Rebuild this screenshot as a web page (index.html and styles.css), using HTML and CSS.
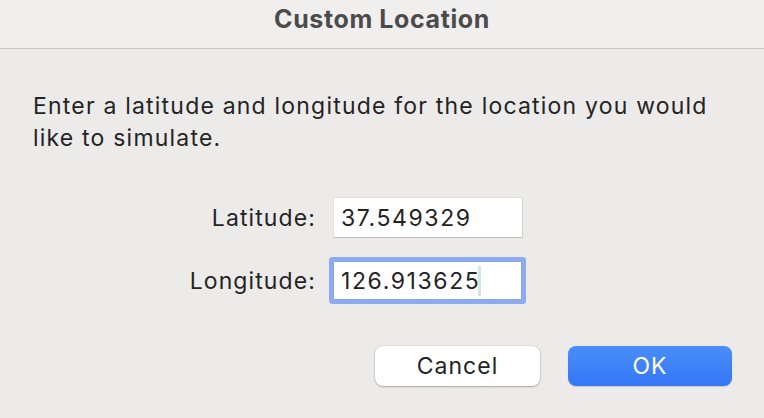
FILE: index.html
```html
<!DOCTYPE html>
<html>
<head>
<meta charset="utf-8">
<link rel="stylesheet" href="styles.css">
</head>
<body>
<div class="window">
  <div class="titlebar"><span class="title">Custom Location</span></div>
  <div class="content">
    <p class="message">Enter a latitude and longitude for the location you would like to simulate.</p>
    <div class="form">
      <div class="row">
        <label class="label">Latitude:</label>
        <div class="field"><span class="value">37.549329</span></div>
      </div>
      <div class="row">
        <label class="label">Longitude:</label>
        <div class="field focused"><span class="value">126.913625</span><span class="caret"></span></div>
      </div>
    </div>
    <div class="buttons">
      <button class="btn cancel">Cancel</button>
      <button class="btn ok">OK</button>
    </div>
  </div>
</div>
</body>
</html>
```
FILE: styles.css
```css
html, body {
  margin: 0;
  padding: 0;
  width: 764px;
  height: 418px;
  overflow: hidden;
  background: #ecebe9;
  font-family: Inter, "Noto Sans", sans-serif;
  color: #242424;
}
.window {
  display: flex;
  flex-direction: column;
  width: 764px;
  height: 418px;
}
.titlebar {
  height: 49px;
  background: #f0efed;
  border-bottom: 1px solid #c9c8c6;
  display: flex;
  justify-content: center;
  align-items: flex-start;
  box-sizing: border-box;
}
.title {
  font-size: 25px;
  line-height: 30px;
  margin-top: 4px;
  font-weight: 700;
  color: #4b4b4b;
  letter-spacing: 0.6px;
}
.content {
  padding: 41px 32px 0 33px;
  display: flex;
  flex-direction: column;
}
.message {
  margin: 0;
  font-size: 23px;
  line-height: 32px;
  width: 699px;
  letter-spacing: 1.2px;
}
.form {
  margin-top: 43px;
  display: flex;
  flex-direction: column;
  gap: 22px;
}
.row {
  display: flex;
  align-items: center;
  height: 41px;
}
.label {
  width: 283px;
  text-align: right;
  font-size: 23px;
  letter-spacing: 1.1px;
  margin-right: 17px;
}
.field {
  width: 190px;
  height: 41px;
  box-sizing: border-box;
  background: #fff;
  border: 1px solid #e2e1df;
  border-right-color: #d0cfcd;
  border-bottom-color: #bfbebc;
  display: flex;
  align-items: center;
  padding-left: 7px;
  font-size: 23px;
  letter-spacing: 1.6px;
}
.field.focused {
  width: 189px;
  height: 39px;
  border: 1px solid #87a6ea;
  box-shadow: 0 0 0 4px #8dabee;
  border-radius: 1px;
}
.caret {
  display: inline-block;
  flex: none;
  width: 3px;
  height: 30px;
  background: #d3eadb;
  margin-left: -2px;
}
.buttons {
  margin-top: 45px;
  display: flex;
  justify-content: flex-end;
  gap: 28px;
}
.btn {
  width: 165px;
  height: 40px;
  border-radius: 8px;
  font-family: Inter, "Noto Sans", sans-serif;
  font-size: 23px;
  letter-spacing: 1px;
  border: none;
  padding: 0;
}
.cancel {
  background: #fff;
  color: #242424;
  box-shadow: 0 0 0 0.5px rgba(0,0,0,0.12), 0 1px 2px rgba(0,0,0,0.25);
}
.ok {
  width: 164px;
  background: linear-gradient(#4a8ef8, #3476f6);
  color: #fff;
  box-shadow: 0 1px 1px rgba(0,0,0,0.15);
}
```
